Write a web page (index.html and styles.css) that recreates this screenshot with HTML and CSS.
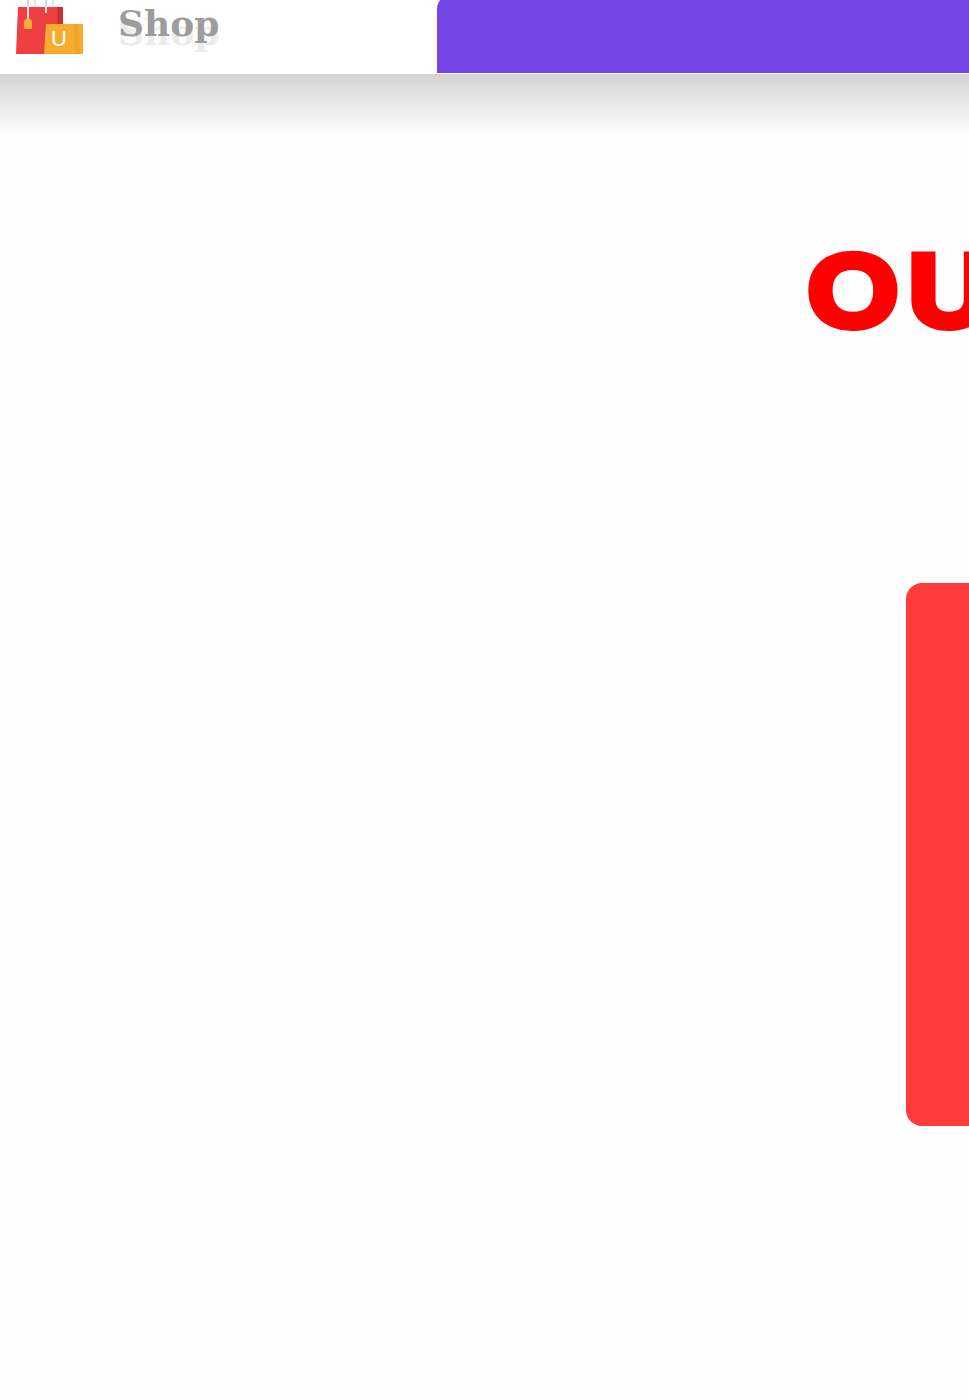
FILE: index.html
```html
<!DOCTYPE html>
<html lang="en">
<head>
    <meta charset="UTF-8">
    <meta name="viewport" content="width=device-width, initial-scale=1.0">
    <title>Shop</title>
    <link rel="stylesheet" href="styles.css">
</head>
<body>
    <header class="topbar">
        <a class="brand" href="#">
            <svg class="brand-logo" width="68" height="54" viewBox="0 0 68 54">
                <rect x="11" y="0" width="2" height="8" fill="#d8d8d8"/>
                <rect x="18" y="0" width="2" height="8" fill="#e4e4e4"/>
                <rect x="29" y="0" width="2" height="8" fill="#d8d8d8"/>
                <rect x="36" y="0" width="2" height="8" fill="#e4e4e4"/>
                <polygon points="2,7 47,7 47,54 0,54" fill="#ef3f42"/>
                <polygon points="41,7 47,7 47,24 41,24" fill="#c9302f"/>
                <rect x="11" y="7" width="2" height="12" fill="#f6e6e6"/>
                <rect x="29" y="7" width="2" height="6" fill="#f6e6e6"/>
                <polygon points="11,18 13,18 16,21 16,29 8,29 8,21" fill="#f7ae35"/>
                <polygon points="30,24 67,24 67,54 28,54" fill="#f8ab2c"/>
                <polygon points="57,24 62,24 64,54 59,54" fill="#efa529"/>
                <text class="brand-bag-letter" x="43" y="46">U</text>
            </svg>
            <span class="brand-name">Shop</span>
        </a>
        <div class="topbar-panel"></div>
    </header>
    <div class="topbar-shade"></div>

    <main class="content">
        <h1 class="headline">OUR</h1>
        <section class="promo-card"></section>
    </main>
</body>
</html>
```

FILE: styles.css
```css
html{
    overflow: hidden;
}
body{
    margin: 0;
    padding: 0;
    min-height: 1399px;
    background-color: #fefefe;
    font-family: "Liberation Sans", Arial, sans-serif;
}
.topbar{
    display: flex;
    height: 74px;
    background-color: #fff;
}
.brand{
    display: flex;
    align-items: flex-start;
    width: 437px;
    text-decoration: none;
}
.brand-logo{
    margin-left: 16px;
    flex-shrink: 0;
}
.brand-bag-letter{
    font-family: "Liberation Sans", Arial, sans-serif;
    font-size: 22px;
    text-anchor: middle;
    fill: #fff;
}
.brand-name{
    margin-left: 34px;
    font-family: "DejaVu Serif", serif;
    font-weight: 700;
    font-size: 36px;
    line-height: 46px;
    color: #9c9c9c;
    text-shadow: 0 9px 0 #ececec;
}
.topbar-panel{
    flex: 1;
    height: 78px;
    margin-top: -5px;
    background-color: #7545e8;
    border-top-left-radius: 14px;
}
.topbar-shade{
    height: 60px;
    background: linear-gradient(to bottom, #d3d3d3, #fefefe);
}
.content{
    display: flex;
    flex-direction: column;
}
.headline{
    margin: 102px 0 0 810px;
    font-size: 96px;
    line-height: 110px;
    font-weight: 400;
    white-space: nowrap;
    color: #ff0000;
    -webkit-text-stroke: 12px #ff0000;
    letter-spacing: 12px;
    transform: scaleX(1.15);
    transform-origin: left center;
}
.promo-card{
    margin: 237px 0 0 906px;
    width: 400px;
    height: 543px;
    background-color: #ff3b3b;
    border-radius: 16px;
}
```
